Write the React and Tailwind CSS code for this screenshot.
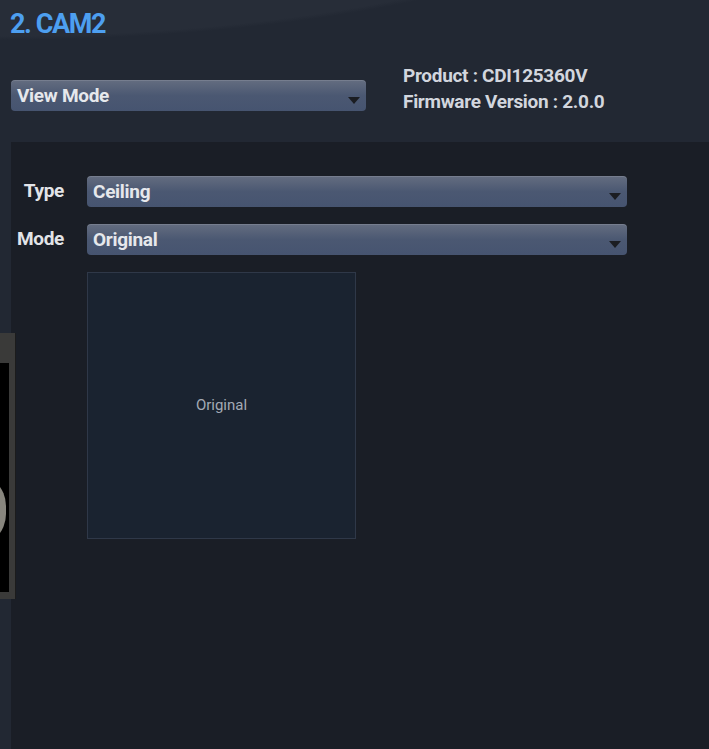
import React from 'react';

const font = { fontFamily: '"Liberation Sans Narrow", "Roboto", "Liberation Sans", sans-serif' };

const Select = ({ value, className }) => (
  <div
    className={`relative flex items-center h-[31px] rounded-[4px] bg-gradient-to-b from-[#646d80] via-[#4b5872] to-[#465470] shadow-[inset_0_1px_0_rgba(255,255,255,0.12)] ${className}`}
  >
    <span className="pl-[6px] text-[19px] font-bold text-[#e6e8ec] leading-none tracking-[-0.3px]">{value}</span>
    <span className="absolute right-[6px] bottom-[7px] w-0 h-0 border-l-[6px] border-r-[6px] border-t-[7px] border-l-transparent border-r-transparent border-t-[#1b1d22]" />
  </div>
);

const App = () => {
  return (
    <div className="relative w-[709px] h-[749px] overflow-hidden bg-[#222833]" style={font}>
      {/* header */}
      <div className="relative h-[142px] bg-[radial-gradient(ellipse_700px_200px_at_0px_-160px,#272d38_98%,#222833_100%)]">
        <h1 className="absolute left-[10px] top-[11px] text-[27px] font-bold text-[#4d9ff0] leading-none tracking-[-1.4px]">2. CAM2</h1>
        <div className="absolute left-[11px] top-[80px] w-[355px]">
          <Select value="View Mode" />
        </div>
        <div className="absolute left-[403px] top-[63px] text-[19px] font-bold text-[#d2d6de] leading-[26px] tracking-[-0.3px]">
          <div>Product : CDI125360V</div>
          <div>Firmware Version : 2.0.0</div>
        </div>
      </div>

      {/* panel */}
      <div className="ml-[11px] h-[607px] bg-[#1a1e26] pt-[34px]">
        <div className="flex flex-col gap-[17px]">
          <div className="flex items-center">
            <span className="w-[76px] text-right pr-[23px] text-[19px] font-bold text-[#e2e4e8] tracking-[-0.3px]">Type</span>
            <Select value="Ceiling" className="w-[540px]" />
          </div>
          <div className="flex items-center">
            <span className="w-[76px] text-right pr-[23px] text-[19px] font-bold text-[#e2e4e8] tracking-[-0.3px]">Mode</span>
            <Select value="Original" className="w-[540px]" />
          </div>
        </div>
        <div className="ml-[76px] mt-[17px] w-[269px] h-[267px] bg-[#1a2330] border border-[#2f3848] flex items-center justify-center">
          <span className="text-[15px] text-[#a3aab5]" style={{ fontFamily: 'Roboto, sans-serif' }}>Original</span>
        </div>
      </div>

      {/* video window peeking from left */}
      <div className="absolute left-0 top-[333px] w-[16px] h-[266px] bg-[#3a3a39] border-r border-[#1c1c1c]">
        <div className="absolute left-0 top-[30px] w-[9px] h-[229px] bg-black overflow-hidden">
          <div className="absolute left-[-60px] top-[110px] w-[66px] h-[74px] rounded-full bg-[#88867e]" />
        </div>
      </div>
    </div>
  );
};

export default App;
